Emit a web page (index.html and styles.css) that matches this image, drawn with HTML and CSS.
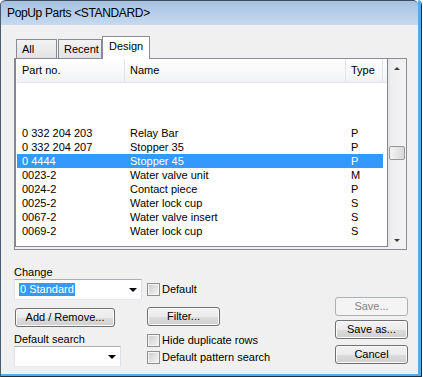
FILE: index.html
```html
<!DOCTYPE html>
<html lang="en">
<head>
    <meta charset="UTF-8">
    <title>PopUp Parts</title>
    <link rel="stylesheet" href="styles.css">
</head>
<body>
    <div class="window">
        <div class="frame">
            <div class="titlebar">PopUp Parts &lt;STANDARD&gt;</div>
            <div class="client">
                <div class="tabs">
                    <div class="tab">All</div>
                    <div class="tab">Recent</div>
                    <div class="tab active">Design</div>
                </div>

                <div class="panel">
                    <div class="list">
                        <div class="row header">
                            <div class="c1">Part no.</div>
                            <div class="c2">Name</div>
                            <div class="c3">Type</div>
                        </div>
                        <div class="spacer"></div>
                        <div class="row"><div class="c1">0 332 204 203</div><div class="c2">Relay Bar</div><div class="c3">P</div></div>
                        <div class="row"><div class="c1">0 332 204 207</div><div class="c2">Stopper 35</div><div class="c3">P</div></div>
                        <div class="row selected"><div class="c1">0 4444</div><div class="c2">Stopper 45</div><div class="c3">P</div></div>
                        <div class="row"><div class="c1">0023-2</div><div class="c2">Water valve unit</div><div class="c3">M</div></div>
                        <div class="row"><div class="c1">0024-2</div><div class="c2">Contact piece</div><div class="c3">P</div></div>
                        <div class="row"><div class="c1">0025-2</div><div class="c2">Water lock cup</div><div class="c3">S</div></div>
                        <div class="row"><div class="c1">0067-2</div><div class="c2">Water valve insert</div><div class="c3">S</div></div>
                        <div class="row"><div class="c1">0069-2</div><div class="c2">Water lock cup</div><div class="c3">S</div></div>
                    </div>
                    <div class="scrollbar">
                        <div class="sb-btn"><span class="arrow-up"></span></div>
                        <div class="sb-track"><div class="thumb"></div></div>
                        <div class="sb-btn"><span class="arrow-down"></span></div>
                    </div>
                </div>

                <div class="controls">
                    <div class="col left">
                        <div class="label">Change</div>
                        <div class="combo wide">
                            <span class="combo-text"><span class="sel">0 Standard</span></span>
                            <span class="arrow-down"></span>
                        </div>
                        <div class="button add">Add / Remove...</div>
                        <div class="label search">Default search</div>
                        <div class="combo narrow">
                            <span class="combo-text"></span>
                            <span class="arrow-down"></span>
                        </div>
                    </div>

                    <div class="col mid">
                        <div class="check"><span class="box"></span>Default</div>
                        <div class="button filter">Filter...</div>
                        <div class="check hide"><span class="box"></span>Hide duplicate rows</div>
                        <div class="check pattern"><span class="box"></span>Default pattern search</div>
                    </div>

                    <div class="col right">
                        <div class="button disabled">Save...</div>
                        <div class="button saveas">Save as...</div>
                        <div class="button cancel">Cancel</div>
                    </div>
                </div>
            </div>
        </div>
    </div>
</body>
</html>
```

FILE: styles.css
```css
* {
    box-sizing: border-box;
    margin: 0;
    padding: 0;
}

body {
    margin: 0;
    background: #ffffff;
    font-family: "Liberation Sans", Arial, sans-serif;
    font-size: 11px;
    color: #000;
}

.window {
    width: 422px;
    height: 377px;
    border-left: 1px solid #4b5a6c;
    border-right: 1px solid #1e2f44;
    border-bottom: 1px solid #1e2f44;
    border-radius: 5px 5px 0 0;
    overflow: hidden;
}

.frame {
    height: 100%;
    display: flex;
    flex-direction: column;
    border-right: 3px solid #58aae2;
    border-bottom: 2px solid #58aae2;
}

.titlebar {
    height: 25px;
    flex: none;
    padding: 5px 0 0 6px;
    border-top: 1px solid #3b4c60;
    border-radius: 5px 5px 0 0;
    background: linear-gradient(to bottom, #a6c2e0, #c6daef);
    font-size: 12px;
    letter-spacing: -0.35px;
    line-height: 15px;
}

.client {
    flex: 1;
    background: #f0f0f0;
    padding-left: 13px;
}

/* tabs */
.tabs {
    height: 33px;
    display: flex;
    align-items: flex-end;
    padding-left: 2px;
}

.tab {
    height: 19px;
    padding: 3px 0 0 5px;
    line-height: 13px;
    border: 1px solid #898c95;
    border-bottom: none;
    background: linear-gradient(to bottom, #f3f3f3, #e2e2e2);
}

.tab:nth-child(1) { width: 41px; margin-right: 1px; }
.tab:nth-child(2) { width: 44px; }

.tab.active {
    width: 48px;
    height: 23px;
    padding-left: 6px;
    margin-bottom: -1px;
    background: #fff;
    position: relative;
    z-index: 1;
}

/* list panel */
.panel {
    width: 393px;
    height: 192px;
    display: flex;
    border: 1px solid #898c95;
    background: #f0f0f0;
}

.list {
    width: 373px;
    height: 188px;
    padding-left: 1px;
    background: #fff;
    border: 1px solid #828790;
    border-top: none;
}

.row {
    display: flex;
    height: 14px;
    line-height: 14px;
    white-space: nowrap;
}

.row .c1 { width: 108px; padding-left: 5px; }
.row .c2 { width: 221px; padding-left: 5px; }
.row .c3 { width: 37px; padding-left: 5px; }

.row.selected {
    width: 366px;
    background: #3399ff;
    color: #fff;
}

.row.header {
    height: 24px;
    line-height: 23px;
    border-bottom: 1px solid #e2e4e8;
    background: linear-gradient(to bottom, #ffffff, #f1f2f4);
}

.row.header > div {
    border-right: 1px solid #e1e3e7;
}

.spacer {
    height: 43px;
}

.scrollbar {
    width: 18px;
    height: 188px;
    display: flex;
    flex-direction: column;
    background: linear-gradient(to right, #e3e3e3, #efefef 20%, #f2f2f2);
}

.sb-btn {
    height: 17px;
    display: flex;
    align-items: center;
    justify-content: center;
}

.sb-track {
    flex: 1;
    padding-top: 70px;
}

.thumb {
    width: 16px;
    height: 14px;
    margin-left: 1px;
    border: 1px solid #979797;
    border-radius: 2px;
    background: linear-gradient(to right, #f4f4f4, #e6e6e6 50%, #d8d8d8);
}

.arrow-up {
    width: 0;
    height: 0;
    border-left: 3px solid transparent;
    border-right: 3px solid transparent;
    border-bottom: 3px solid #3c3c3c;
    margin-top: 2px;
}

.arrow-down {
    width: 0;
    height: 0;
    border-left: 4px solid transparent;
    border-right: 4px solid transparent;
    border-top: 4px solid #000;
}

.scrollbar .arrow-down {
    border-left-width: 3px;
    border-right-width: 3px;
    border-top-width: 3px;
    border-top-color: #3c3c3c;
    margin-top: 4px;
}

/* lower controls */
.controls {
    display: flex;
}

.col {
    display: flex;
    flex-direction: column;
    align-items: flex-start;
}

.col.left { width: 133px; padding-top: 16px; }
.col.mid { width: 188px; padding-top: 33px; }
.col.right { width: 73px; padding-top: 47px; }

.label {
    line-height: 13px;
}

.label.search {
    margin-top: 6px;
}

.combo {
    height: 21px;
    display: flex;
    align-items: center;
    justify-content: space-between;
    padding: 0 4px 0 4px;
    background: #fff;
    border: 1px solid;
    border-color: #abadb3 #dbdfe6 #e3e9ef #e2e3ea;
}

.combo.wide { width: 128px; }
.combo.narrow { width: 107px; }

.combo-text {
    line-height: 13px;
}

.sel {
    display: inline-block;
    padding: 0 1px;
    background: #3399ff;
    color: #fff;
    line-height: 13px;
}

.button {
    height: 19px;
    line-height: 17px;
    text-align: center;
    border: 1px solid #707070;
    border-radius: 3px;
    background: linear-gradient(to bottom, #f2f2f2 0%, #ebebeb 50%, #dddddd 51%, #cfcfcf 100%);
    box-shadow: inset 0 0 0 1px #fbfbfb;
}

.button.add { width: 100px; margin: 8px 0 0 1px; }
.button.filter { width: 73px; margin-top: 11px; }
.col.right .button { width: 73px; }
.button.saveas { margin-top: 4px; }
.button.cancel { margin-top: 6px; }

.button.disabled {
    color: #838383;
    border-color: #adb2b5;
    background: #f4f4f4;
    box-shadow: none;
}

.check {
    display: flex;
    align-items: center;
    height: 13px;
    line-height: 13px;
}

.check.hide { margin-top: 8px; }
.check.pattern { margin-top: 4px; }

.box {
    width: 13px;
    height: 13px;
    margin-right: 2px;
    border: 1px solid #8e8f8f;
    background: linear-gradient(135deg, #cbcbcb, #f6f6f6);
    box-shadow: inset 0 0 0 1px #f4f4f4;
}
```
